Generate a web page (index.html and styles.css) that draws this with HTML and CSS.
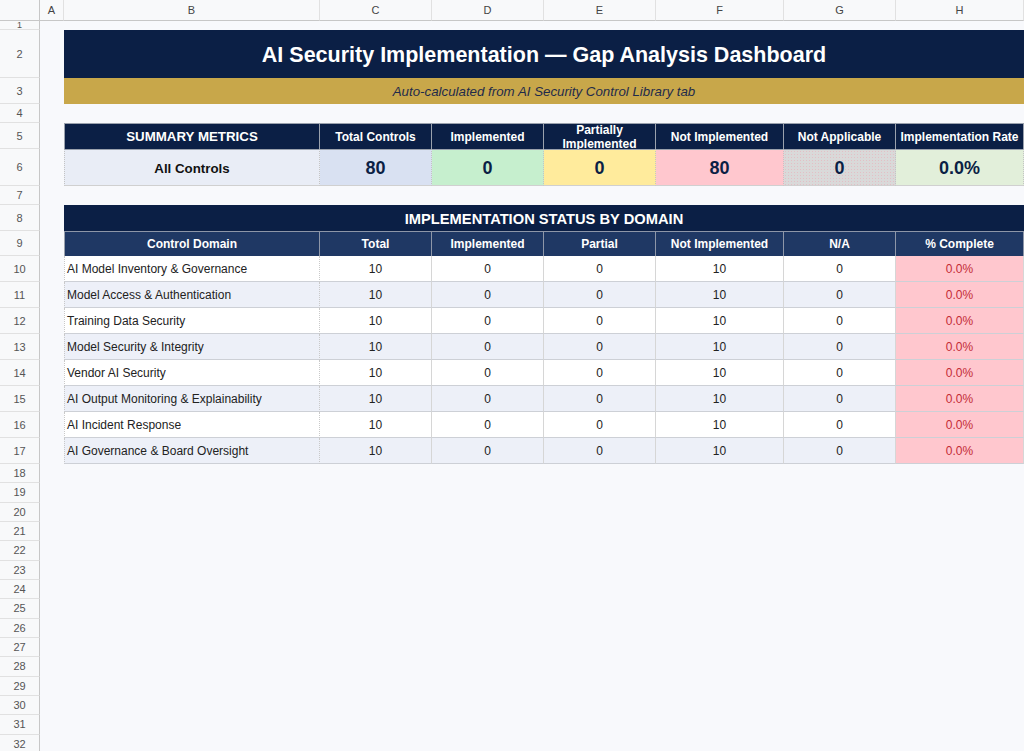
FILE: index.html
```html
<!DOCTYPE html>
<html lang="en">
<head>
    <meta charset="UTF-8">
    <meta name="viewport" content="width=device-width, initial-scale=1.0">
    <title>AI Security Gap Analysis</title>
    <link rel="stylesheet" href="styles.css">
</head>
<body>

<div class="sheet">
    <!-- column letters -->
    <div class="row row-letters">
        <div class="corner"></div>
        <div class="col">A</div>
        <div class="col">B</div>
        <div class="col">C</div>
        <div class="col">D</div>
        <div class="col">E</div>
        <div class="col">F</div>
        <div class="col">G</div>
        <div class="col">H</div>
    </div>

    <div class="row row-top"><div class="rn">1</div></div>

    <div class="row row-title">
        <div class="rn">2</div><div></div>
        <div class="title">AI Security Implementation — Gap Analysis Dashboard</div>
    </div>

    <div class="row row-sub">
        <div class="rn">3</div><div></div>
        <div class="subtitle">Auto-calculated from AI Security Control Library tab</div>
    </div>

    <div class="row row-gap"><div class="rn">4</div></div>

    <!-- summary block -->
    <div class="row row-head">
        <div class="rn">5</div><div></div>
        <div class="sh first big">SUMMARY METRICS</div>
        <div class="sh">Total Controls</div>
        <div class="sh">Implemented</div>
        <div class="sh">Partially Implemented</div>
        <div class="sh">Not Implemented</div>
        <div class="sh">Not Applicable</div>
        <div class="sh">Implementation Rate</div>
    </div>

    <div class="row row-metric">
        <div class="rn">6</div><div></div>
        <div class="mv label first">All Controls</div>
        <div class="mv total">80</div>
        <div class="mv done">0</div>
        <div class="mv partial">0</div>
        <div class="mv missing">80</div>
        <div class="mv na">0</div>
        <div class="mv rate">0.0%</div>
    </div>

    <div class="row row-gap"><div class="rn">7</div></div>

    <!-- status by domain -->
    <div class="row row-band">
        <div class="rn">8</div><div></div>
        <div class="band">IMPLEMENTATION STATUS BY DOMAIN</div>
    </div>

    <div class="row row-colhead">
        <div class="rn">9</div><div></div>
        <div class="dh first">Control Domain</div>
        <div class="dh">Total</div>
        <div class="dh">Implemented</div>
        <div class="dh">Partial</div>
        <div class="dh">Not Implemented</div>
        <div class="dh">N/A</div>
        <div class="dh">% Complete</div>
    </div>

    <div class="row row-data">
        <div class="rn">10</div><div></div>
        <div class="dc name">AI Model Inventory &amp; Governance</div>
        <div class="dc">10</div><div class="dc">0</div><div class="dc">0</div>
        <div class="dc">10</div><div class="dc">0</div><div class="dc pct">0.0%</div>
    </div>
    <div class="row row-data alt">
        <div class="rn">11</div><div></div>
        <div class="dc name">Model Access &amp; Authentication</div>
        <div class="dc">10</div><div class="dc">0</div><div class="dc">0</div>
        <div class="dc">10</div><div class="dc">0</div><div class="dc pct">0.0%</div>
    </div>
    <div class="row row-data">
        <div class="rn">12</div><div></div>
        <div class="dc name">Training Data Security</div>
        <div class="dc">10</div><div class="dc">0</div><div class="dc">0</div>
        <div class="dc">10</div><div class="dc">0</div><div class="dc pct">0.0%</div>
    </div>
    <div class="row row-data alt">
        <div class="rn">13</div><div></div>
        <div class="dc name">Model Security &amp; Integrity</div>
        <div class="dc">10</div><div class="dc">0</div><div class="dc">0</div>
        <div class="dc">10</div><div class="dc">0</div><div class="dc pct">0.0%</div>
    </div>
    <div class="row row-data">
        <div class="rn">14</div><div></div>
        <div class="dc name">Vendor AI Security</div>
        <div class="dc">10</div><div class="dc">0</div><div class="dc">0</div>
        <div class="dc">10</div><div class="dc">0</div><div class="dc pct">0.0%</div>
    </div>
    <div class="row row-data alt">
        <div class="rn">15</div><div></div>
        <div class="dc name">AI Output Monitoring &amp; Explainability</div>
        <div class="dc">10</div><div class="dc">0</div><div class="dc">0</div>
        <div class="dc">10</div><div class="dc">0</div><div class="dc pct">0.0%</div>
    </div>
    <div class="row row-data">
        <div class="rn">16</div><div></div>
        <div class="dc name">AI Incident Response</div>
        <div class="dc">10</div><div class="dc">0</div><div class="dc">0</div>
        <div class="dc">10</div><div class="dc">0</div><div class="dc pct">0.0%</div>
    </div>
    <div class="row row-data alt">
        <div class="rn">17</div><div></div>
        <div class="dc name">AI Governance &amp; Board Oversight</div>
        <div class="dc">10</div><div class="dc">0</div><div class="dc">0</div>
        <div class="dc">10</div><div class="dc">0</div><div class="dc pct">0.0%</div>
    </div>

    <!-- empty rows -->
    <div class="row row-empty"><div class="rn">18</div></div>
    <div class="row row-empty"><div class="rn">19</div></div>
    <div class="row row-empty"><div class="rn">20</div></div>
    <div class="row row-empty"><div class="rn">21</div></div>
    <div class="row row-empty"><div class="rn">22</div></div>
    <div class="row row-empty"><div class="rn">23</div></div>
    <div class="row row-empty"><div class="rn">24</div></div>
    <div class="row row-empty"><div class="rn">25</div></div>
    <div class="row row-empty"><div class="rn">26</div></div>
    <div class="row row-empty"><div class="rn">27</div></div>
    <div class="row row-empty"><div class="rn">28</div></div>
    <div class="row row-empty"><div class="rn">29</div></div>
    <div class="row row-empty"><div class="rn">30</div></div>
    <div class="row row-empty"><div class="rn">31</div></div>
    <div class="row row-empty"><div class="rn">32</div></div>
</div>

</body>
</html>
```

FILE: styles.css
```css
body {
    margin: 0;
    font-family: "Liberation Sans", Arial, sans-serif;
    background-color: #f8f9fc;
}

.sheet {
    width: 1024px;
    height: 751px;
    overflow: hidden;
}

.row {
    display: grid;
    grid-template-columns: 40px 24px 256px 112px 112px 112px 128px 112px 128px;
}

.row > div {
    box-sizing: border-box;
    display: flex;
    align-items: center;
    justify-content: center;
    overflow: hidden;
}

/* row and column headers */
.rn {
    background-color: #f8f9fa;
    border-right: 1px solid #c7c7c7;
    border-bottom: 1px solid #e1e1e1;
    color: #555;
    font-size: 11px;
}

.row-letters {
    height: 21px;
}

.corner,
.row-letters .col {
    background-color: #f8f9fa;
    border-right: 1px solid #e1e1e1;
    border-bottom: 1px solid #c7c7c7;
    color: #444;
    font-size: 11px;
}

.corner {
    border-right-color: #c7c7c7;
}

.row-top { height: 9px; }
.row-title { height: 48px; }
.row-sub { height: 26px; }
.row-gap { height: 19px; }
.row-head { height: 26px; }
.row-metric { height: 37px; }
.row-band { height: 26px; }
.row-colhead { height: 25px; }
.row-data { height: 26px; }
.row-empty { height: 19.33px; }

/* row 1 is shorter than its label */
.row-top .rn {
    font-size: 9px;
    line-height: 9px;
}

/* banner */
.title {
    grid-column: span 7;
    background-color: #0b1f45;
    color: #fff;
    font-size: 21.5px;
    font-weight: bold;
    padding-top: 3px;
}

.subtitle {
    grid-column: span 7;
    background-color: #c8a74a;
    color: #1f2b4a;
    font-size: 13.3px;
    font-style: italic;
}

/* summary metrics */
.sh {
    background-color: #0b1f45;
    color: #fff;
    font-size: 12px;
    font-weight: bold;
    line-height: 14px;
    text-align: center;
    border-top: 1px solid #9aa1ad;
    border-right: 1px solid #9aa1ad;
    padding: 0 2px;
}

.sh.big {
    font-size: 13.3px;
}

.sh.first,
.dh.first,
.mv.first {
    border-left: 1px solid #9aa1ad;
}

.mv {
    font-size: 18px;
    font-weight: bold;
    color: #0b1f45;
    border-top: 1px solid #9aa1ad;
    border-right: 1px dotted #c4c4c4;
    border-bottom: 1px solid #d0d0d0;
    padding-top: 2px;
}

.mv.label {
    font-size: 13.3px;
    color: #111;
    background-color: #e9edf6;
    border-left: 1px dotted #c4c4c4;
}

.mv.total { background-color: #d9e1f2; }
.mv.done { background-color: #c6efce; }
.mv.partial { background-color: #ffeb9c; }
.mv.missing { background-color: #ffc7ce; }
.mv.rate { background-color: #e2efda; }

.mv.na {
    background-color: #d9d9d9;
    background-image: radial-gradient(circle, rgba(236, 170, 180, 0.55) 0.5px, transparent 0.9px);
    background-size: 3px 3px;
}

/* status by domain */
.band {
    grid-column: span 7;
    background-color: #0b1f45;
    color: #fff;
    font-size: 14.7px;
    font-weight: bold;
    padding-top: 2px;
}

.dh {
    background-color: #1f3864;
    color: #fff;
    font-size: 12px;
    font-weight: bold;
    border-top: 1px solid #8d96a8;
    border-right: 1px solid #8d96a8;
}

.dc {
    background-color: #fff;
    color: #222;
    font-size: 12px;
    border-bottom: 1px solid #cdd0d6;
    border-right: 1px solid #d6d6d6;
}

.row-data .dc.name {
    justify-content: flex-start;
    padding-left: 2px;
    border-left: 1px dotted #c9c9c9;
    border-right: 1px dotted #c9c9c9;
}

.row-data.alt .dc {
    background-color: #edf0f8;
}

.row-data .dc.pct {
    background-color: #ffc7ce;
    color: #c42b36;
}
```
